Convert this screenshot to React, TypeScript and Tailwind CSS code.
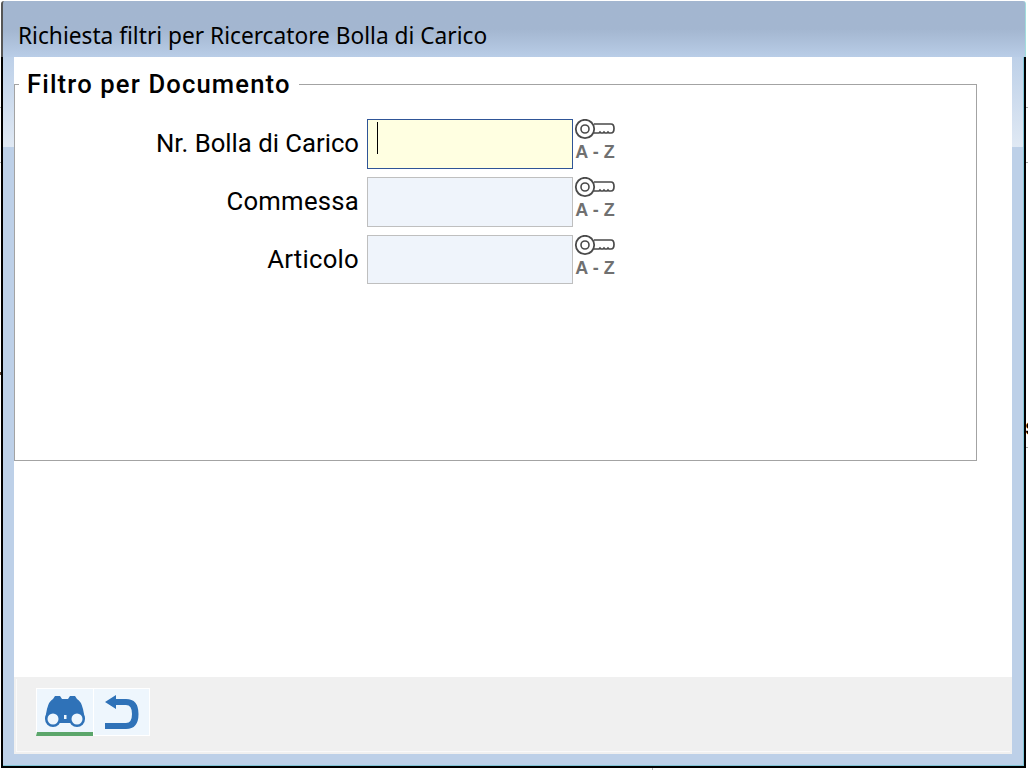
function KeyIcon() {
  return (
    <div className="self-start w-[42px] flex flex-col items-center">
      <svg width="42" height="22" viewBox="0 0 42 22" fill="none" stroke="#4a4a4a" className="shrink-0">
        <circle cx="12" cy="10" r="9.2" strokeWidth="1.8" />
        <circle cx="12" cy="10" r="4" strokeWidth="1.6" />
        <path d="M21 5h17q3 0 3 4.5t-3 4.5h-2l-1-1-1 1h-2l-1-1-1 1h-2l-1-1-1 1h-5" strokeWidth="1.7" />
      </svg>
      <span className="mt-[2px] ml-[2px] text-[18px] leading-[18px] font-bold text-[#707070] whitespace-nowrap font-['Liberation_Sans',sans-serif]">
        A - Z
      </span>
    </div>
  );
}

export default function App() {
  const rows = [
    { label: "Nr. Bolla di Carico", active: true, rowH: "h-[50px]", boxH: "h-[50px]", track: "tracking-normal" },
    { label: "Commessa", active: false, rowH: "h-[50px]", boxH: "h-[50px]", track: "tracking-[0.25px]" },
    { label: "Articolo", active: false, rowH: "h-[49px]", boxH: "h-[49px]", track: "tracking-[0.25px]" },
  ];
  return (
    <div className="relative w-[1028px] h-[770px] overflow-hidden bg-white font-['Roboto',sans-serif] text-black">
      <div className="absolute left-0 top-[107px] w-px h-px bg-[#aaa]" />
      <div className="absolute left-0 top-[162px] w-px h-px bg-[#aaa]" />
      <div className="absolute left-0 top-[372px] w-px h-[3px] bg-[#5a4030]" />
      <div className="absolute right-0 top-[107px] w-[2px] h-px bg-[#aaa]" />
      <div className="absolute right-0 top-[162px] w-[2px] h-px bg-[#aaa]" />
      <div className="absolute right-0 top-[447px] w-[2px] h-px bg-[#aaa]" />
      <div className="absolute left-[1025px] top-[412px] text-[24px] leading-[30px] font-medium">s</div>
      <div className="absolute left-[652px] top-[768px] w-px h-[2px] bg-[#bbb]" />

      <div className="ml-px mt-px w-[1025px] flex flex-col">
        <div className="h-[56px] shrink-0 pl-[15px] pt-[19px] border-l-2 border-l-[#555] border-r border-r-[#9fdcdc] rounded-tl-[3px] rounded-tr-[3px] bg-gradient-to-b from-[#a3b6d0] via-[#a3b6d0] to-[#b9cde7] text-[22.7px] leading-[32px] whitespace-nowrap font-['Noto_Sans',sans-serif]">
          Richiesta filtri per Ricercatore Bolla di Carico
        </div>
        <div className="h-[711px] border-l-2 border-r-2 border-b-2 border-black">
          <div className="h-full flex flex-col border-r border-b border-[#7fc4d6] bg-[#bdd0e8]">
            <div className="flex">
              <div className="w-[11px] shrink-0">
                <div className="h-[90px] bg-gradient-to-b from-[#bdd0e8] to-[#e0e9f4]" />
              </div>
              <div className="w-[998px] h-[697px] bg-white flex flex-col">
                <div className="flex-1">
                  <fieldset className="w-[963px] h-[392px] mt-[12px] border border-[#a3a3a3]">
                    <legend className="ml-[4px] px-[8px] text-[25.6px] leading-[30px] font-medium tracking-[1.15px] whitespace-nowrap">
                      Filtro per Documento
                    </legend>
                    <div className="mt-[20px] flex flex-col gap-[8px]">
                      {rows.map((r) => (
                        <div key={r.label} className={"flex items-start " + r.rowH}>
                          <span className={"w-[344px] text-right text-[25.7px] leading-[48px] whitespace-nowrap " + r.track}>
                            {r.label}
                          </span>
                          <div
                            className={
                              r.active
                                ? "ml-[8px] w-[206px] border border-[#2f5597] bg-[#ffffe1] pl-[9px] pt-[2px] " + r.boxH
                                : "ml-[8px] w-[206px] border border-[#bfbfbf] bg-[#eff4fb] " + r.boxH
                            }
                          >
                            {r.active && <div className="w-px h-[32px] bg-black" />}
                          </div>
                          <KeyIcon />
                        </div>
                      ))}
                    </div>
                  </fieldset>
                </div>
                <div className="h-[77px] shrink-0 bg-[#f0f0f0] pl-[2px] pt-[2px] pr-[2px] pb-[2px]">
                  <div className="h-full border-l border-b border-[#fafafa] pl-[19px] pt-[9px]">
                    <div className="flex">
                      <button className="w-[57px] h-[48px] bg-[#eef6fd] border-t border-l border-white border-b-4 border-b-[#5ba66b] flex items-center justify-center">
                        <svg width="42" height="32" viewBox="0 0 42 32" fill="#2f72b8" className="mr-[1px]">
                          <path d="M1 24L3 14Q5 6 9 4L11 1H16L18 4H24L26 1H31L33 4Q37 6 39 14L41 24Z" />
                          <rect x="14" y="18" width="14" height="10" />
                          <circle cx="9" cy="24" r="8" />
                          <circle cx="33" cy="24" r="8" />
                          <circle cx="9" cy="24" r="5.5" fill="#eef6fd" />
                          <circle cx="33" cy="24" r="5.5" fill="#eef6fd" />
                          <rect x="20" y="20" width="2.5" height="4" fill="#eef6fd" />
                        </svg>
                      </button>
                      <button className="w-[57px] h-[48px] bg-[#eef6fd] border border-white flex items-center justify-center">
                        <svg width="36" height="36" viewBox="0 0 36 36" fill="#2f72b8">
                          <path d="M1 8L12 1V5H22Q34.5 5 34.5 20Q34.5 35 22 35H1V29H22Q28 29 28 20Q28 11 22 11H12V15Z" />
                        </svg>
                      </button>
                    </div>
                  </div>
                </div>
              </div>
              <div className="w-[11px] shrink-0">
                <div className="h-[90px] bg-gradient-to-b from-[#bdd0e8] to-[#e0e9f4]" />
              </div>
            </div>
          </div>
        </div>
      </div>
    </div>
  );
}
